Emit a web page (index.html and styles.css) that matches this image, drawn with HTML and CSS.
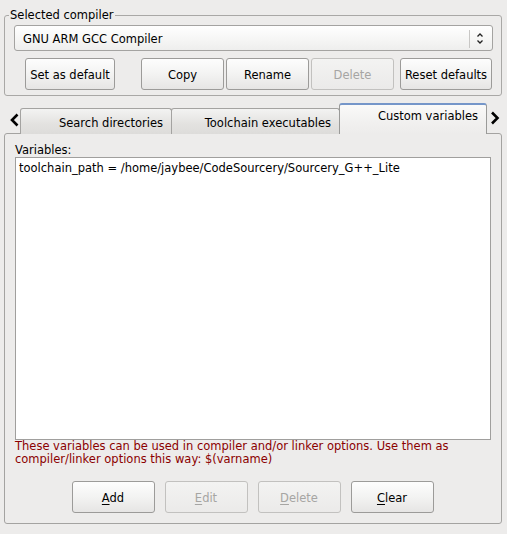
FILE: index.html
```html
<!DOCTYPE html>
<html>
<head>
<meta charset="utf-8">
<link rel="stylesheet" href="styles.css">
</head>
<body>
<fieldset class="group">
  <legend class="group-title">Selected compiler</legend>
  <div class="combo">
    <span class="combo-text">GNU ARM GCC Compiler</span>
    <span class="combo-sep"></span>
    <svg class="combo-arrow" width="8" height="13" viewBox="0 0 8 13"><polyline points="1.5,4.5 4,2 6.5,4.5" fill="none" stroke="#222" stroke-width="1.3"/><polyline points="1.5,8.5 4,11 6.5,8.5" fill="none" stroke="#222" stroke-width="1.3"/></svg>
  </div>
  <div class="btn-row">
    <button class="btn w90 ml11">Set as default</button>
    <button class="btn w83 ml26">Copy</button>
    <button class="btn w83 ml2">Rename</button>
    <button class="btn w83 ml2" disabled>Delete</button>
    <button class="btn w92 ml6">Reset defaults</button>
  </div>
</fieldset>

<div class="tabs">
  <div class="tabbar">
    <svg class="nav nav-left" width="16" height="16" viewBox="0 0 16 16"><polyline points="10.5,2.5 5,8 10.5,13.5" fill="none" stroke="#000" stroke-width="2.6"/></svg>
    <div class="tab t1">Search directories</div>
    <div class="tab t2">Toolchain executables</div>
    <div class="tab active">Custom variables</div>
    <svg class="nav nav-right" width="14" height="16" viewBox="0 0 14 16"><polyline points="4,2.5 9.5,8 4,13.5" fill="none" stroke="#000" stroke-width="2.6"/></svg>
  </div>
  <div class="pane">
    <div class="label">Variables:</div>
    <div class="list">toolchain_path = /home/jaybee/CodeSourcery/Sourcery_G++_Lite</div>
    <div class="note">These variables can be used in compiler and/or linker options. Use them as<br>compiler/linker options this way: $(varname)</div>
    <div class="bottom-row">
      <button class="btn w83"><u>A</u>dd</button>
      <button class="btn w83" disabled><u>E</u>dit</button>
      <button class="btn w83" disabled><u>D</u>elete</button>
      <button class="btn w83"><u>C</u>lear</button>
    </div>
  </div>
</div>
</body>
</html>
```

FILE: styles.css
```css
html, body {
  margin: 0;
  padding: 0;
}
body {
  background: #edeceb;
  font-family: "DejaVu Sans", sans-serif;
  font-size: 11.5px;
  color: #000;
  padding: 8px 5px 9px 4px;
  width: 498px;
}
.group {
  margin: 0;
  border: 1px solid #a9a8a6;
  border-radius: 3px;
  padding: 2px 8px 5px 9px;
}
.group-title {
  padding: 0 1px;
  margin-left: -5px;
  line-height: 15px;
}
.combo {
  height: 26px;
  box-sizing: border-box;
  border: 1px solid #a4a3a1;
  border-radius: 3px;
  background: linear-gradient(#ffffff, #f6f6f5 55%, #eeeeed);
  display: flex;
  align-items: center;
  padding-left: 8px;
  padding-top: 1px;
}
.combo-text {
  flex: 1;
}
.combo-sep {
  width: 1px;
  height: 18px;
  background: #c8c7c5;
  margin-right: 6px;
}
.combo-arrow {
  margin-right: 8px;
}
.btn-row {
  display: flex;
  margin-top: 7px;
}
.btn {
  font: inherit;
  color: #000;
  height: 32px;
  box-sizing: border-box;
  border: 1px solid #9c9b99;
  border-radius: 3px;
  background: linear-gradient(#fdfdfd, #f3f3f2 50%, #e6e5e4);
  padding: 1px 0 0 0;
}
.btn:disabled {
  color: #a6a5a3;
  border-color: #c2c1bf;
  background: linear-gradient(#f3f3f2, #ebeae9);
}
.btn u {
  text-decoration-thickness: 1px;
  text-underline-offset: 2px;
}
.w90 { width: 90px; }
.w83 { width: 83px; }
.w92 { width: 92px; }
.ml11 { margin-left: 11px; }
.ml26 { margin-left: 26px; }
.ml2 { margin-left: 2px; }
.ml6 { margin-left: 6px; }

.tabs {
  margin-top: 8px;
}
.tabbar {
  display: flex;
  align-items: flex-end;
  height: 30px;
  margin-bottom: -1px;
}
.nav {
  align-self: center;
}
.nav-left {
  margin-left: 3px;
  margin-right: -3px;
  margin-top: 1px;
}
.nav-right {
  margin-left: 1px;
  margin-top: -2px;
}
.tab {
  box-sizing: border-box;
  height: 26px;
  border: 1px solid #a4a3a1;
  border-bottom: none;
  border-radius: 3px 3px 0 0;
  background: linear-gradient(#f3f3f2, #e3e2e0 60%, #dddcda);
  text-align: right;
  padding-right: 8px;
  line-height: 24px;
  padding-top: 2px;
}
.t1 { width: 152px; }
.t2 { width: 169px; margin-left: -1px; }
.tab.active {
  position: relative;
  width: 148px;
  height: 31px;
  margin-left: -1px;
  border-top: 2px solid #7596c9;
  border-color: #9a9a98;
  border-top-color: #7596c9;
  background: linear-gradient(#fafaf9, #f1f0ef 60%, #edeceb);
  padding-top: 0;
  line-height: 23px;
}
.pane {
  border: 1px solid #a4a3a1;
  border-radius: 3px;
  padding: 10px 10px 10px 10px;
  box-sizing: border-box;
  height: 391px;
}
.label {
  line-height: 13px;
}
.list {
  box-sizing: border-box;
  height: 283px;
  border: 1px solid #a09f9d;
  background: #fff;
  padding: 3px 3px;
  line-height: 15px;
}
.note {
  color: #8b0000;
  line-height: 13px;
}
.bottom-row {
  display: flex;
  justify-content: center;
  gap: 10px;
  margin-top: 15px;
  margin-right: 1px;
}
```
